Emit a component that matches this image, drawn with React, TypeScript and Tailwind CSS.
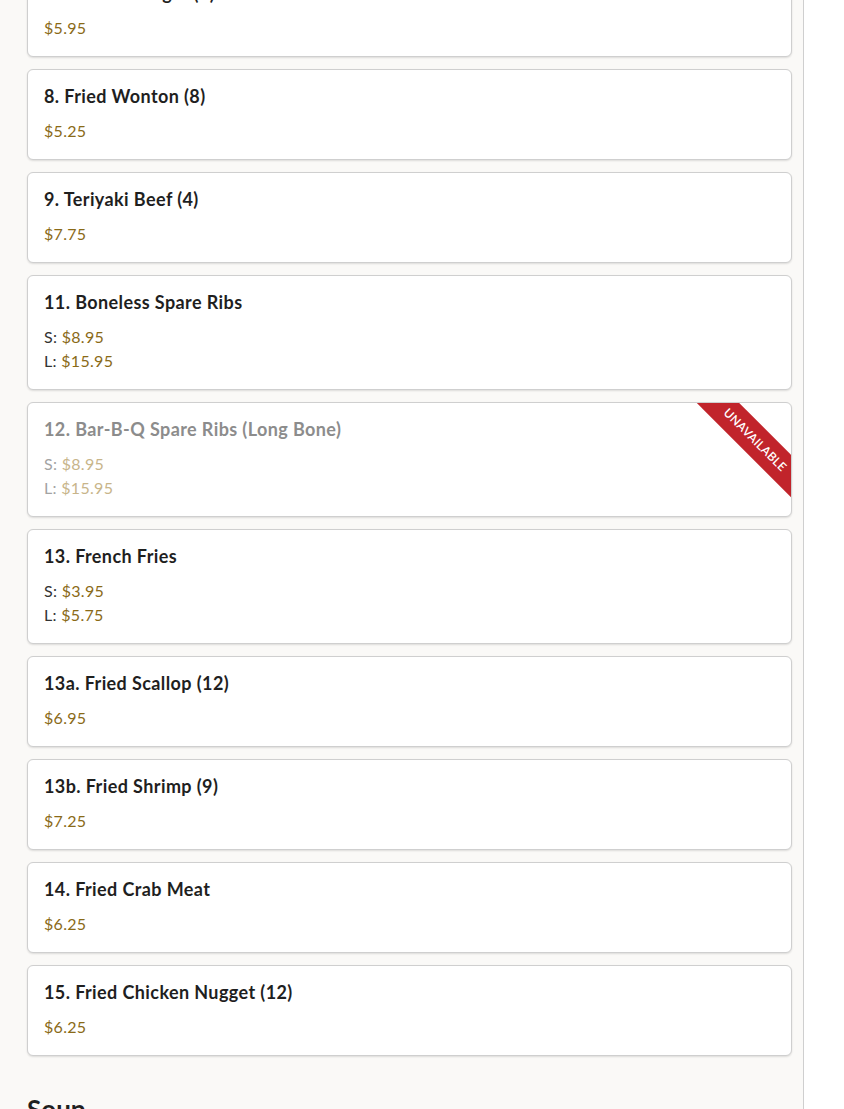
import React from 'react';

type Item = {
  name: string;
  prices: { label?: string; value: string }[];
  unavailable?: boolean;
};

const items: Item[] = [
  { name: '7. Chicken Finger (6)', prices: [{ value: '$5.95' }] },
  { name: '8. Fried Wonton (8)', prices: [{ value: '$5.25' }] },
  { name: '9. Teriyaki Beef (4)', prices: [{ value: '$7.75' }] },
  {
    name: '11. Boneless Spare Ribs',
    prices: [
      { label: 'S', value: '$8.95' },
      { label: 'L', value: '$15.95' },
    ],
  },
  {
    name: '12. Bar-B-Q Spare Ribs (Long Bone)',
    prices: [
      { label: 'S', value: '$8.95' },
      { label: 'L', value: '$15.95' },
    ],
    unavailable: true,
  },
  {
    name: '13. French Fries',
    prices: [
      { label: 'S', value: '$3.95' },
      { label: 'L', value: '$5.75' },
    ],
  },
  { name: '13a. Fried Scallop (12)', prices: [{ value: '$6.95' }] },
  { name: '13b. Fried Shrimp (9)', prices: [{ value: '$7.25' }] },
  { name: '14. Fried Crab Meat', prices: [{ value: '$6.25' }] },
  { name: '15. Fried Chicken Nugget (12)', prices: [{ value: '$6.25' }] },
];

function MenuCard({ item }: { item: Item }) {
  const off = item.unavailable;
  return (
    <div className="relative overflow-hidden rounded-md border border-[#cfcfcf] bg-white px-4 pt-[13px] pb-4 shadow-[0_1px_2px_rgba(0,0,0,0.12)]">
      {off && (
        <div className="absolute top-[21.5px] right-[-43.5px] flex h-[30px] w-[160px] rotate-45 items-center justify-center bg-[#c1242b] text-[12px] font-semibold uppercase tracking-[0.02em] text-white">
          Unavailable
        </div>
      )}
      <h3 className={`text-[18px] leading-[27px] font-bold tracking-[0.4px] ${off ? 'text-[#8c8c8c]' : 'text-[#1f1f1f]'}`}>
        {item.name}
      </h3>
      <div className="mt-[9px]">
        {item.prices.map((p) => (
          <div key={p.value + (p.label ?? '')} className="text-[16px] leading-[24px] tracking-[0.3px]">
            {p.label && <span className={off ? 'text-[#a3a3a3]' : 'text-[#333333]'}>{p.label}: </span>}
            <span className={off ? 'text-[#c8b58a]' : 'text-[#8a6a17]'}>{p.value}</span>
          </div>
        ))}
      </div>
    </div>
  );
}

export default function App() {
  return (
    <div className="flex min-h-[1109px] bg-white" style={{ fontFamily: 'Lato, "Noto Sans", sans-serif' }}>
      <div className="w-[804px] shrink-0 overflow-hidden border-r border-[#cfcfcf] bg-[#faf9f7] pl-[27px] pr-[11px]">
        <div className="-mt-[34px] flex flex-col gap-3">
          {items.map((item) => (
            <MenuCard key={item.name} item={item} />
          ))}
        </div>
        <h2 className="mt-[37px] text-[26px] leading-[32px] font-bold text-[#1f1f1f]">Soup</h2>
      </div>
      <div className="flex-1" />
    </div>
  );
}
